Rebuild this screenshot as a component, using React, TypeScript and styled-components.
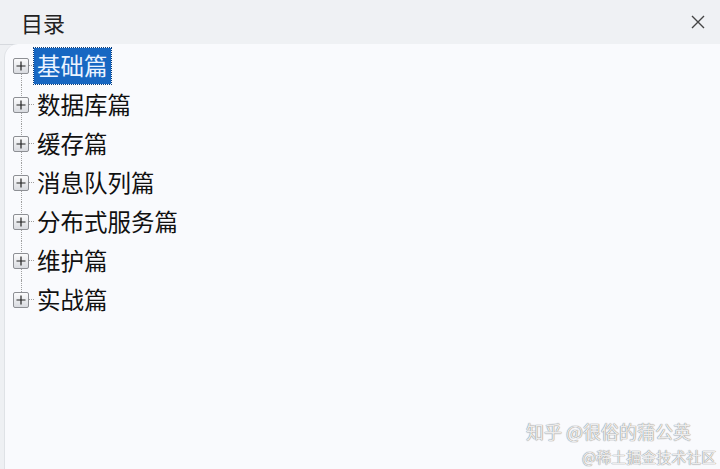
import React from "react";
import styled, { createGlobalStyle } from "styled-components";

const Global = createGlobalStyle`
  html, body { margin: 0; padding: 0; background: #eef0f3; }
  body { font-family: "Noto Sans CJK SC", "Noto Sans", sans-serif; }
  * { box-sizing: border-box; }
`;

const Window = styled.div`
  width: 720px;
  height: 469px;
  display: flex;
  flex-direction: column;
  background: #eef0f3;
  overflow: hidden;
  position: relative;
`;

const Header = styled.div`
  height: 45px;
  flex: none;
  display: flex;
  align-items: center;
  justify-content: space-between;
  padding: 0 12px 0 21px;
  background: #eff1f4;
  border-bottom: 1px solid #d6d9de;
`;

const Title = styled.div`
  font-size: 22px;
  color: #222;
  line-height: 1;
  margin-top: -1px;
`;

const Close = styled.button`
  width: 20px;
  height: 20px;
  border: none;
  background: none;
  padding: 0;
  display: flex;
  align-items: center;
  justify-content: center;
  color: #444;
`;

const Body = styled.div`
  flex: 1;
  margin-left: 4px;
  margin-top: -1px;
  background: #f9fafd;
  border-left: 1px solid #dfe2e6;
  border-top-left-radius: 14px;
  padding: 2px 0 0 8px;
  position: relative;
`;

const Tree = styled.ul`
  list-style: none;
  margin: 0;
  padding: 0;
  position: relative;
`;

const Item = styled.li`
  height: 39px;
  display: flex;
  align-items: center;
  position: relative;
`;

const Connector = styled.span<{ $top: boolean; $bottom: boolean }>`
  position: absolute;
  left: 8px;
  top: ${(p) => (p.$top ? "0" : "50%")};
  bottom: ${(p) => (p.$bottom ? "0" : "50%")};
  border-left: 1px dotted #a0a0a0;
`;

const Expander = styled.span`
  width: 16px;
  height: 16px;
  flex: none;
  border: 1px solid #8d8f94;
  border-radius: 2px;
  background: linear-gradient(#fbfbfc, #d9dbe0);
  display: flex;
  align-items: center;
  justify-content: center;
  position: relative;
  z-index: 1;
`;

const Dash = styled.span`
  width: 5px;
  border-top: 1px dotted #a0a0a0;
  flex: none;
`;

const Label = styled.span<{ $selected?: boolean }>`
  font-size: 23.5px;
  line-height: 35px;
  height: 36px;
  padding: 0 3px;
  color: ${(p) => (p.$selected ? "#eaf3ff" : "#111")};
  background: ${(p) => (p.$selected ? "#1767c2" : "transparent")};
  outline: ${(p) => (p.$selected ? "1px dotted #0b3d7a" : "none")};
  white-space: nowrap;
`;

const Watermark = styled.div`
  position: absolute;
  right: 18px;
  bottom: 5px;
  width: 180px;
  height: 42px;
  pointer-events: none;
`;

const WmLine = styled.span<{ $size: number; $top: number; $left: number }>`
  position: absolute;
  top: ${(p) => p.$top}px;
  left: ${(p) => p.$left}px;
  font-size: ${(p) => p.$size}px;
  height: ${(p) => p.$size}px;
  color: rgba(255, 255, 255, 0.85);
  text-shadow: 0 0 1px #888, 0 0 1px #888;
  white-space: nowrap;
  line-height: 1;
`;

const items = ["基础篇", "数据库篇", "缓存篇", "消息队列篇", "分布式服务篇", "维护篇", "实战篇"];

export default function App() {
  return (
    <Window>
      <Global />
      <Header>
        <Title>目录</Title>
        <Close aria-label="close">
          <svg width="14" height="14" viewBox="0 0 14 14">
            <path d="M1 1 L13 13 M13 1 L1 13" stroke="#444" strokeWidth="1.4" fill="none" />
          </svg>
        </Close>
      </Header>
      <Body>
        <Tree>
          {items.map((t, i) => (
            <Item key={t}>
              <Connector $top={i > 0} $bottom={i < items.length - 1} />
              <Expander>
                <svg width="12" height="12" viewBox="0 0 12 12">
                  <path d="M1.5 6 H10.5 M6 1.5 V10.5" stroke="#222" strokeWidth="1.2" />
                </svg>
              </Expander>
              <Dash />
              <Label $selected={i === 0}>{t}</Label>
            </Item>
          ))}
        </Tree>
        <Watermark>
          <WmLine $size={18} $top={0} $left={4}>知乎 @很俗的蒲公英</WmLine>
          <WmLine $size={15} $top={27} $left={60}>@稀土掘金技术社区</WmLine>
        </Watermark>
      </Body>
    </Window>
  );
}
